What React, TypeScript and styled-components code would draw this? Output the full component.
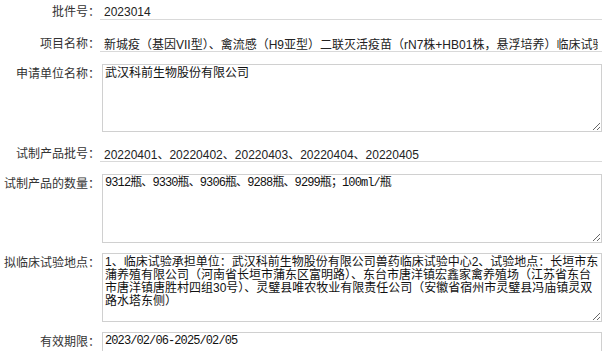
import React from "react";
import styled, { createGlobalStyle } from "styled-components";

const GlobalStyle = createGlobalStyle`
  html, body {
    margin: 0;
    padding: 0;
    background: #ffffff;
    font-family: "Liberation Sans", "Noto Sans CJK SC", sans-serif;
    font-size: 12px;
    color: #333333;
    overflow: hidden;
  }
`;

type FieldKind = "line" | "area";
type FieldFont = "sans" | "song";

interface FieldProps {
  label: string;
  value: string;
  kind: FieldKind;
  font?: FieldFont;
  height?: number;
}

// 批件信息
const fields: FieldProps[] = [
  { label: "批件号：", value: "2023014", kind: "line" },
  {
    label: "项目名称：",
    value: "新城疫（基因VII型）、禽流感（H9亚型）二联灭活疫苗（rN7株+HB01株，悬浮培养）临床试验",
    kind: "line",
  },
  { label: "申请单位名称：", value: "武汉科前生物股份有限公司", kind: "area", height: 68 },
  {
    label: "试制产品批号：",
    value: "20220401、20220402、20220403、20220404、20220405",
    kind: "line",
  },
  {
    label: "试制产品的数量：",
    value: "9312瓶、9330瓶、9306瓶、9288瓶、9299瓶；100ml/瓶",
    kind: "area",
    font: "song",
    height: 69,
  },
  {
    label: "拟临床试验地点：",
    value:
      "1、临床试验承担单位：武汉科前生物股份有限公司兽药临床试验中心2、试验地点：长垣市东蒲养殖有限公司（河南省长垣市蒲东区富明路）、东台市唐洋镇宏鑫家禽养殖场（江苏省东台市唐洋镇唐胜村四组30号）、灵璧县唯农牧业有限责任公司（安徽省宿州市灵璧县冯庙镇灵双路水塔东侧）",
    kind: "area",
    height: 69,
  },
  { label: "有效期限：", value: "2023/02/06-2025/02/05", kind: "area", font: "song", height: 69 },
];

const Form = styled.div`
  width: 608px;
  display: flex;
  flex-direction: column;
  gap: 10px;
`;

const Row = styled.div`
  display: grid;
  grid-template-columns: 100px 1fr;
  align-items: start;
`;

const Label = styled.label<{ $kind: FieldKind }>`
  text-align: right;
  white-space: nowrap;
  color: #333333;
  font-size: 12px;
  line-height: ${(p) => (p.$kind === "line" ? "20px" : "13px")};
  padding-top: ${(p) => (p.$kind === "line" ? "2px" : "4px")};
`;

const LineInput = styled.input`
  box-sizing: border-box;
  width: 502px;
  height: 20px;
  margin: 0;
  padding: 4px 4px 0 4px;
  border: none;
  border-bottom: 1px solid #d9d9d9;
  outline: none;
  background: transparent;
  color: #222222;
  font-family: "Liberation Sans", "Noto Sans CJK SC", sans-serif;
  font-size: 12px;
`;

const AreaInput = styled.textarea<{ $font: FieldFont; $h: number }>`
  box-sizing: border-box;
  width: 500px;
  height: ${(p) => p.$h}px;
  margin: 0 0 0 2px;
  padding: 2px 1px 2px 2px;
  border: 1px solid #d0d0d0;
  outline: none;
  background: #ffffff;
  color: #111111;
  font-family: ${(p) =>
    p.$font === "song"
      ? '"Liberation Mono", "Noto Sans CJK SC", monospace'
      : '"Liberation Sans", "Noto Sans CJK SC", sans-serif'};
  font-size: 12px;
  letter-spacing: ${(p) => (p.$font === "song" ? "-0.9px" : "0")};
  line-height: 13px;
  overflow: auto;
  resize: both;
  display: block;
`;

const Field = ({ label, value, kind, font = "sans", height = 69 }: FieldProps) => (
  <Row>
    <Label $kind={kind}>{label}</Label>
    {kind === "line" ? (
      <LineInput readOnly value={value} />
    ) : (
      <AreaInput readOnly value={value} $font={font} $h={height} />
    )}
  </Row>
);

export default function App() {
  return (
    <>
      <GlobalStyle />
      <Form>
        {fields.map((f, i) => (
          <Field key={i} {...f} />
        ))}
      </Form>
    </>
  );
}
